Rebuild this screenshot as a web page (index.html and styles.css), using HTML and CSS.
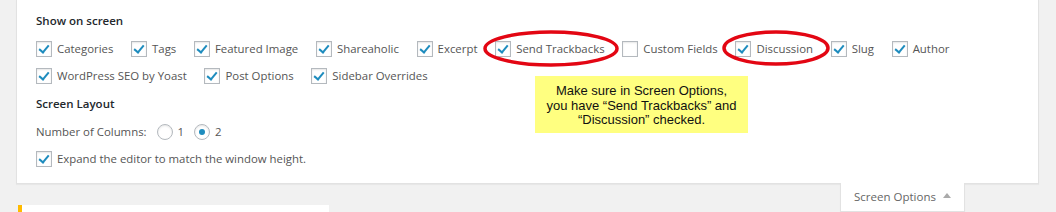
FILE: index.html
```html
<!DOCTYPE html>
<html>
<head>
<meta charset="utf-8">
<link rel="stylesheet" href="styles.css">
</head>
<body>
<div class="page">
  <div class="panel">
    <h5 class="heading">Show on screen</h5>
    <div class="prefs">
      <label class="opt"><span class="cb on"></span>Categories</label>
      <label class="opt"><span class="cb on"></span>Tags</label>
      <label class="opt"><span class="cb on"></span>Featured Image</label>
      <label class="opt"><span class="cb on"></span>Shareaholic</label>
      <label class="opt"><span class="cb on"></span>Excerpt</label>
      <label class="opt"><span class="cb on"></span>Send Trackbacks</label>
      <label class="opt"><span class="cb"></span>Custom Fields</label>
      <label class="opt"><span class="cb on"></span>Discussion</label>
      <label class="opt"><span class="cb on"></span>Slug</label>
      <label class="opt"><span class="cb on"></span>Author</label>
      <label class="opt"><span class="cb on"></span>WordPress SEO by Yoast</label>
      <label class="opt"><span class="cb on"></span>Post Options</label>
      <label class="opt"><span class="cb on"></span>Sidebar Overrides</label>
    </div>
    <h5 class="heading h2">Screen Layout</h5>
    <div class="cols">
      <span class="cols-label">Number of Columns:</span>
      <label class="radio-opt"><span class="rb"></span>1</label>
      <label class="radio-opt"><span class="rb on"></span>2</label>
    </div>
    <div class="expand">
      <label class="opt"><span class="cb on"></span>Expand the editor to match the window height.</label>
    </div>
  </div>
  <div class="tabrow">
    <div class="tab">Screen Options <span class="arrow"></span></div>
  </div>
  <div class="notice"></div>

  <svg class="marks" width="1056" height="212" viewBox="0 0 1056 212">
    <ellipse cx="551" cy="48.5" rx="66" ry="16.5" fill="none" stroke="#e30613" stroke-width="3.5"/>
    <ellipse cx="776" cy="48" rx="52" ry="16" fill="none" stroke="#e30613" stroke-width="3.5"/>
  </svg>
  <div class="note">Make sure in Screen Options,<br>you have “Send Trackbacks” and<br>“Discussion” checked.</div>
</div>
</body>
</html>
```

FILE: styles.css
```css
html, body {
  margin: 0;
  padding: 0;
  background: #f1f1f1;
}
.page {
  position: relative;
  width: 1056px;
  height: 212px;
  overflow: hidden;
  font-family: "Open Sans", "Noto Sans", sans-serif;
  font-size: 11.4px;
  color: #555;
}
.panel {
  margin: 0 17px 0 16px;
  background: #fff;
  border: 1px solid #e2e2e2;
  border-top: none;
  box-shadow: 0 1px 1px rgba(0,0,0,.04);
  padding: 11px 19px 0 19px;
  height: 184px;
  box-sizing: border-box;
}
.heading {
  margin: 0;
  font-size: 11.5px;
  font-weight: 600;
  color: #23282d;
  line-height: 20px;
}
.h2 {
  margin-top: 5px;
}
.prefs {
  display: flex;
  flex-wrap: wrap;
  column-gap: 17.7px;
  margin-top: 4px;
  width: 960px;
}
.opt {
  display: inline-flex;
  align-items: center;
  height: 27px;
  line-height: 27px;
  white-space: nowrap;
}
.cb {
  width: 14px;
  height: 14px;
  border: 1px solid #b4b9be;
  box-shadow: inset 0 1px 2px rgba(0,0,0,.1);
  background: #fff;
  margin-right: 5px;
  position: relative;
  flex: none;
}
.cb.on::after {
  content: "";
  position: absolute;
  left: 4px;
  top: 1px;
  width: 4px;
  height: 8px;
  border-right: 2px solid #1e8cbe;
  border-bottom: 2px solid #1e8cbe;
  transform: rotate(40deg);
}
.cols {
  display: flex;
  align-items: center;
  height: 27px;
  margin-top: 4px;
}
.cols-label {
  margin-right: 5px;
}
.radio-opt {
  display: inline-flex;
  align-items: center;
  margin-left: 5px;
  margin-right: 5px;
}
.rb {
  width: 14px;
  height: 14px;
  border: 1px solid #b4b9be;
  border-radius: 50%;
  box-shadow: inset 0 1px 2px rgba(0,0,0,.1);
  background: #fff;
  margin-right: 5px;
  position: relative;
}
.rb.on::after {
  content: "";
  position: absolute;
  left: 4px;
  top: 4px;
  width: 6px;
  height: 6px;
  border-radius: 50%;
  background: #1e8cbe;
}
.expand {
  margin-top: 0;
}
.tabrow {
  display: flex;
  justify-content: flex-end;
  margin-right: 91px;
  margin-top: -1px;
}
.tab {
  width: 125px;
  height: 29px;
  background: #fff;
  border: 1px solid #e2e2e2;
  border-top: none;
  box-shadow: 0 1px 1px rgba(0,0,0,.04);
  display: flex;
  align-items: center;
  justify-content: center;
  color: #666;
  font-size: 11.5px;
  padding-bottom: 2px;
  box-sizing: border-box;
}
.arrow {
  display: inline-block;
  margin-left: 7px;
  width: 0;
  height: 0;
  border-left: 4px solid transparent;
  border-right: 4px solid transparent;
  border-bottom: 5px solid #aaa;
  margin-top: -2px;
}
.notice {
  position: absolute;
  left: 18px;
  top: 205px;
  width: 307px;
  height: 20px;
  background: #fff;
  border-left: 4px solid #ffba00;
}
.marks {
  position: absolute;
  left: 0;
  top: 0;
  pointer-events: none;
}
.note {
  position: absolute;
  left: 535px;
  top: 76px;
  width: 213px;
  height: 57px;
  box-sizing: border-box;
  background: #ffff80;
  font-family: "Liberation Sans", Arial, sans-serif;
  font-size: 13px;
  line-height: 14.5px;
  color: #111;
  text-align: center;
  padding-top: 8px;
}
```
